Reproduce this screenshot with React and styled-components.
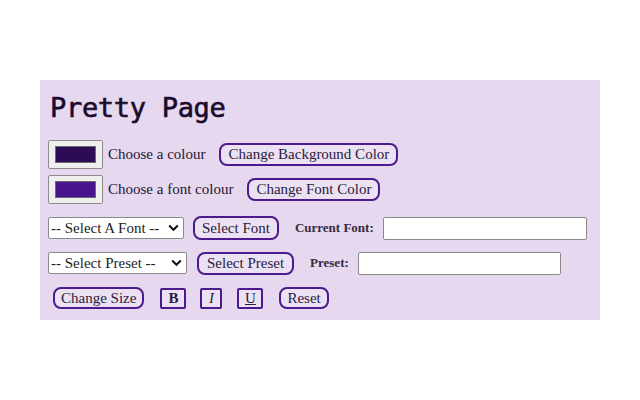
import styled, { createGlobalStyle } from "styled-components";

const GlobalStyle = createGlobalStyle`
  body {
    margin: 0;
    background: #ffffff;
    font-family: "Liberation Serif", serif;
  }
`;

const Page = styled.div`
  width: 640px;
  height: 400px;
  padding: 80px 40px;
  box-sizing: border-box;
`;

const Panel = styled.div`
  width: 560px;
  height: 240px;
  background: #e6d8ee;
  padding: 10px 8px 0 8px;
  box-sizing: border-box;
  color: #241634;
`;

const Title = styled.h1`
  margin: 0 0 0 2px;
  font-family: "DejaVu Sans Mono", monospace;
  font-size: 27px;
  font-weight: normal;
  -webkit-text-stroke: 0.6px #1a0b2e;
  line-height: 36px;
  color: #1a0b2e;
  letter-spacing: -0.3px;
`;

const Row = styled.div`
  display: flex;
  align-items: center;
  margin-top: ${(p) => p.$top || 0}px;
  padding-left: ${(p) => p.$indent || 0}px;
  height: ${(p) => p.$h || 24}px;
`;

const Swatch = styled.div`
  width: 55px;
  height: 29px;
  box-sizing: border-box;
  background: #efefef;
  border: 1px solid #8c8c8c;
  border-radius: 2px;
  padding: 5px 6px;
  flex-shrink: 0;
`;

const SwatchFill = styled.div`
  width: 100%;
  height: 100%;
  background: ${(p) => p.$color};
  border: 1px solid #6b6b6b;
  box-sizing: border-box;
`;

const Label = styled.span`
  font-size: 15px;
  margin-left: ${(p) => p.$left || 0}px;
  color: #241634;
  white-space: nowrap;
`;

const SmallLabel = styled.span`
  font-size: 13px;
  font-weight: bold;
  margin-left: ${(p) => p.$left || 0}px;
  color: #352c42;
  white-space: nowrap;
`;

const Button = styled.button`
  height: ${(p) => p.$h || 23}px;
  margin-left: ${(p) => p.$left || 0}px;
  padding: 0 ${(p) => p.$pad ?? 7}px;
  min-width: ${(p) => p.$w || 0}px;
  box-sizing: border-box;
  border: 2px solid #4b1a8c;
  border-radius: ${(p) => (p.$square ? 2 : 8)}px;
  background: #ece1f3;
  font-family: "Liberation Serif", serif;
  font-size: 15px;
  color: #2a1a40;
  white-space: nowrap;
  font-weight: ${(p) => (p.$bold ? "bold" : "normal")};
  font-style: ${(p) => (p.$italic ? "italic" : "normal")};
  text-decoration: ${(p) => (p.$under ? "underline" : "none")};
`;

const SelectWrap = styled.div`
  position: relative;
  width: ${(p) => p.$w}px;
  height: 22px;
  flex-shrink: 0;
`;

const Select = styled.select`
  appearance: none;
  width: 100%;
  height: 100%;
  box-sizing: border-box;
  background: #ffffff;
  border: 1px solid #8a8a8a;
  border-radius: 2px;
  padding: 0 0 0 2px;
  font-family: "Liberation Serif", serif;
  font-size: 15px;
  color: #1e1e1e;
`;

const Chevron = styled.svg`
  position: absolute;
  right: 5px;
  top: 7px;
  width: 11px;
  height: 8px;
  pointer-events: none;
`;

const TextInput = styled.input`
  width: ${(p) => p.$w}px;
  height: 23px;
  box-sizing: border-box;
  margin-left: 9px;
  background: #ffffff;
  border: 1px solid #8a8a8a;
  border-radius: 2px;
`;

const Dropdown = ({ width, text }) => (
  <SelectWrap $w={width}>
    <Select defaultValue="">
      <option value="">{text}</option>
    </Select>
    <Chevron viewBox="0 0 11 8">
      <path d="M1.2 1.5 L5.5 5.8 L9.8 1.5" fill="none" stroke="#111" strokeWidth="2" />
    </Chevron>
  </SelectWrap>
);

export default function App() {
  return (
    <>
      <GlobalStyle />
      <Page>
        <Panel>
          <Title>Pretty Page</Title>
          <Row $top={14} $h={29}>
            <Swatch>
              <SwatchFill $color="#2c0c54" />
            </Swatch>
            <Label $left={5}>Choose a colour</Label>
            <Button $left={14}>Change Background Color</Button>
          </Row>
          <Row $top={6} $h={29}>
            <Swatch>
              <SwatchFill $color="#4a148e" />
            </Swatch>
            <Label $left={5}>Choose a font colour</Label>
            <Button $left={14}>Change Font Color</Button>
          </Row>
          <Row $top={12}>
            <Dropdown width={136} text="-- Select A Font --" />
            <Button $left={9} $h={24}>Select Font</Button>
            <SmallLabel $left={16}>Current Font:</SmallLabel>
            <TextInput $w={204} />
          </Row>
          <Row $top={11}>
            <Dropdown width={139} text="-- Select Preset --" />
            <Button $left={10} $pad={8} $w={97}>Select Preset</Button>
            <SmallLabel $left={16}>Preset:</SmallLabel>
            <TextInput $w={203} />
          </Row>
          <Row $top={11} $indent={5}>
            <Button $h={22} $pad={6}>Change Size</Button>
            <Button $left={16} $h={21} $w={26} $pad={0} $square $bold>B</Button>
            <Button $left={14} $h={21} $w={22} $pad={0} $square $italic>I</Button>
            <Button $left={15} $h={21} $w={26} $pad={0} $square $under>U</Button>
            <Button $left={16} $h={22} $pad={6}>Reset</Button>
          </Row>
        </Panel>
      </Page>
    </>
  );
}
